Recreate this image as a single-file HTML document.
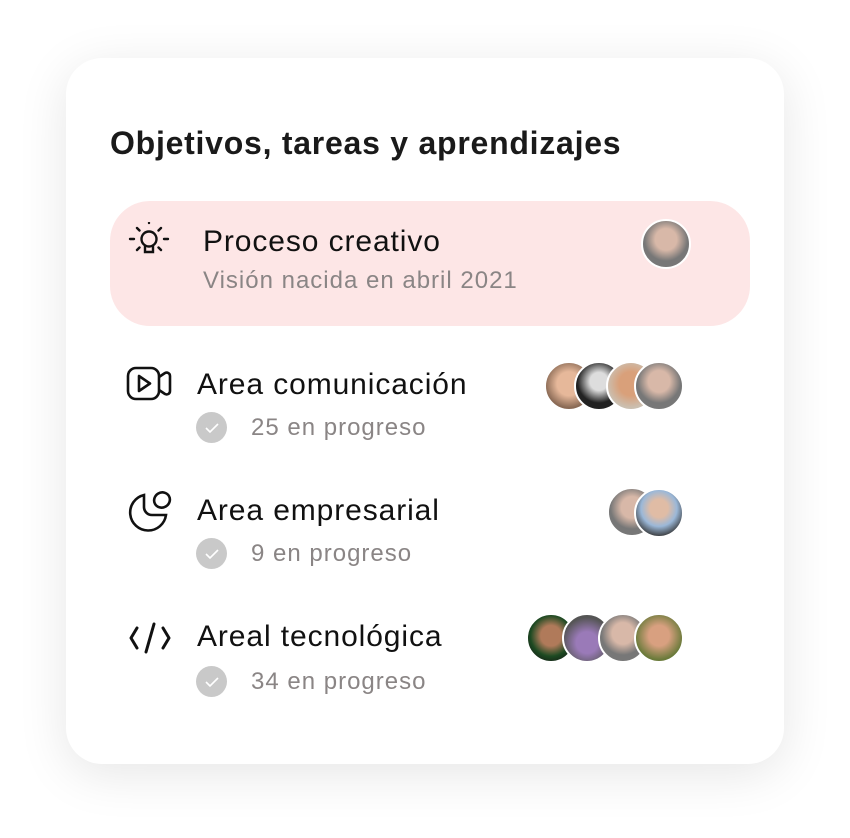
<!DOCTYPE html>
<html><head><meta charset="utf-8"><style>
*{margin:0;padding:0;box-sizing:border-box}
body{width:850px;height:838px;background:#fff;font-family:"Liberation Sans",sans-serif;position:relative;overflow:hidden}
.card{position:absolute;left:66px;top:58px;width:718px;height:706px;background:#fff;border-radius:36px;box-shadow:0 10px 50px rgba(0,0,0,0.1)}
.t{position:absolute;white-space:nowrap}
h1{position:absolute;left:110px;top:125px;font-size:32px;font-weight:bold;color:#1a1a1a;letter-spacing:0.75px}
.pink{position:absolute;left:110px;top:201px;width:640px;height:125px;background:#fde6e6;border-radius:40px}
.name{font-size:30px;color:#111;letter-spacing:0.9px}
.sub{font-size:24px;color:#8a8585;letter-spacing:1px}
.chk{position:absolute;width:31px;height:31px;border-radius:50%;background:#c9c9c9}
.av{position:absolute;width:50px;height:50px;border-radius:50%;border:2px solid #fff}
</style></head><body>
<div class="card"></div>
<h1>Objetivos, tareas y aprendizajes</h1>
<div class="pink"></div>
<svg class="t" style="left:128px;top:222px" width="42" height="38" viewBox="0 0 42 38" fill="none" stroke="#111" stroke-width="2.4" stroke-linecap="round">
<circle cx="21" cy="17" r="7.5"/><path d="M17 24v6h8v-6"/><path d="M2 17h4M36 17h4M9 6l2.5 2.5M33 6l-2.5 2.5M9 28l2.5-2.5M33 28l-2.5-2.5M21 1v0"/></svg>
<div class="t name" style="left:203px;top:225px">Proceso creativo</div>
<div class="t sub" style="left:203px;top:267px">Visión nacida en abril 2021</div>
<div class="av" style="left:641px;top:219px;background:radial-gradient(circle at 50% 40%,#d8b8a8 0 30%,#777 60%)"></div>

<svg class="t" style="left:126px;top:366px" width="48" height="36" viewBox="0 0 48 36" fill="none" stroke="#111" stroke-width="2.6" stroke-linejoin="round">
<rect x="2" y="2" width="31" height="31" rx="8"/><path d="M13 10v15l11-7.5z"/><path d="M33 11l6-4c2-1 5 0 5 3v15c0 3-3 4-5 3l-6-4"/></svg>
<div class="t name" style="left:197px;top:368px">Area comunicación</div>
<div class="chk" style="left:196px;top:412px"></div>
<div class="t sub" style="left:251px;top:414px">25 en progreso</div>
<div class="av" style="left:544px;top:361px;background:radial-gradient(circle at 50% 45%,#e6b89a 0 35%,#8a6a55 70%)"></div>
<div class="av" style="left:574px;top:361px;background:radial-gradient(circle at 50% 40%,#ddd 0 25%,#222 60%)"></div>
<div class="av" style="left:606px;top:361px;background:radial-gradient(circle at 50% 45%,#d9a07a 0 35%,#cbbfb0 70%)"></div>
<div class="av" style="left:634px;top:361px;background:radial-gradient(circle at 50% 40%,#d8b8a8 0 30%,#777 60%)"></div>

<svg class="t" style="left:126px;top:488px" width="48" height="46" viewBox="0 0 48 46" fill="none" stroke="#111" stroke-width="2.6">
<path d="M18 7A18 18 0 1 0 40 27H26a8 8 0 0 1-8-8z"/><ellipse cx="36" cy="12" rx="8" ry="7.5" transform="rotate(-30 36 12)"/></svg>
<div class="t name" style="left:197px;top:494px">Area empresarial</div>
<div class="chk" style="left:196px;top:538px"></div>
<div class="t sub" style="left:251px;top:540px">9 en progreso</div>
<div class="av" style="left:607px;top:487px;background:radial-gradient(circle at 50% 40%,#d8b8a8 0 30%,#777 60%)"></div>
<div class="av" style="left:634px;top:488px;background:radial-gradient(circle at 50% 40%,#e0bca5 0 25%,#9bb8d8 50%,#333 80%)"></div>

<svg class="t" style="left:128px;top:620px" width="44" height="36" viewBox="0 0 44 36" fill="none" stroke="#111" stroke-width="3" stroke-linecap="round" stroke-linejoin="round">
<path d="M9 8L3 18l6 10M35 8l6 10-6 10M26 4l-8 28"/></svg>
<div class="t name" style="left:197px;top:620px">Areal tecnológica</div>
<div class="chk" style="left:196px;top:666px"></div>
<div class="t sub" style="left:251px;top:668px">34 en progreso</div>
<div class="av" style="left:526px;top:613px;background:radial-gradient(circle at 50% 45%,#b07a5a 0 30%,#1d4a22 60%,#111 90%)"></div>
<div class="av" style="left:562px;top:613px;background:radial-gradient(circle at 50% 60%,#9a7ab8 0 30%,#555 70%)"></div>
<div class="av" style="left:598px;top:613px;background:radial-gradient(circle at 50% 40%,#d8b8a8 0 30%,#777 60%)"></div>
<div class="av" style="left:634px;top:613px;background:radial-gradient(circle at 50% 45%,#d8a080 0 30%,#6a7a3a 70%)"></div>
<svg class="t" style="left:196px;top:412px" width="31" height="31"><path d="M10 16l4 4 8-8" fill="none" stroke="#fff" stroke-width="1.6"/></svg>
<svg class="t" style="left:196px;top:538px" width="31" height="31"><path d="M10 16l4 4 8-8" fill="none" stroke="#fff" stroke-width="1.6"/></svg>
<svg class="t" style="left:196px;top:666px" width="31" height="31"><path d="M10 16l4 4 8-8" fill="none" stroke="#fff" stroke-width="1.6"/></svg>
</body></html>
